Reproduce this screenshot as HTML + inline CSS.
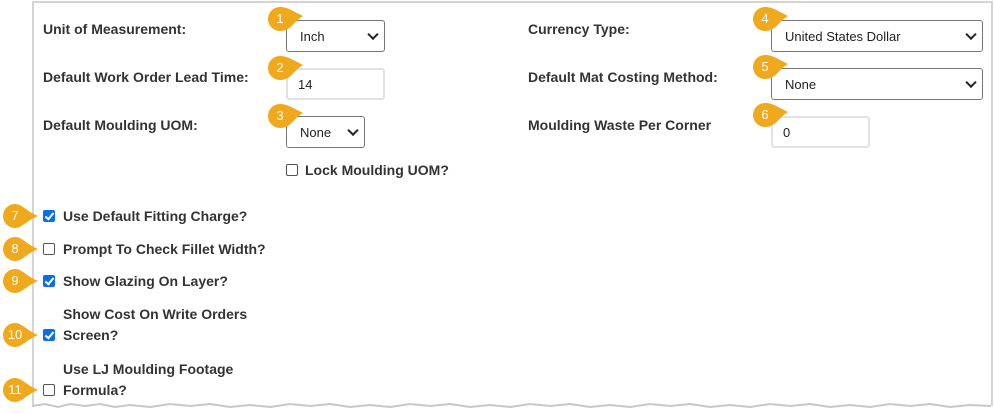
<!DOCTYPE html>
<html style="width:994px;height:414px;overflow:hidden"><head><style>
body{margin:0;width:994px;height:414px;background:#fff;position:relative;overflow:hidden;font-family:"Liberation Sans",Arial,sans-serif;}
.panel{position:absolute;left:32px;top:1px;width:957px;height:405px;border:2px solid #d4d4d4;border-bottom:none;background:#fff;box-sizing:content-box}
.lbl{position:absolute;font-weight:bold;font-size:14px;color:#333;white-space:nowrap}
.ctl{position:absolute;box-sizing:border-box;border:1px solid #777;border-radius:3px;background:#fff;font-size:13px;color:#222;padding-left:13px;display:flex;align-items:center}
.inp{border:2px solid #dfe3e8;}
.chev{position:absolute;right:7px;top:50%;width:6px;height:6px;border-right:2px solid #222;border-bottom:2px solid #222;transform:translateY(-70%) rotate(45deg)}
.cb{position:absolute;width:12px;height:12px;box-sizing:border-box;border:1px solid #555;border-radius:2px;background:#fff}
.cb.on{background:#0a6ee8;border-color:#0a6ee8}
.cb.on::after{content:"";position:absolute;left:3px;top:0px;width:3px;height:7px;border-right:2px solid #fff;border-bottom:2px solid #fff;transform:rotate(40deg)}
.b{position:absolute;width:40px;height:28px}
.b svg{position:absolute;left:0;top:0}
.b span{position:absolute;left:0;top:0;width:26px;height:26px;line-height:25px;text-align:center;color:#fff;font-size:13px}
</style></head><body>
<div class="panel"></div>
<svg width="994" height="414" style="position:absolute;left:0;top:0">
<rect x="0" y="406" width="994" height="8" fill="#fff"/>
<polyline points="32,406 45,404 58,407 70,404 85,406 100,404 115,407 130,405 150,407 170,404 190,406 210,404 230,407 250,405 270,407 290,404 310,406 330,404 350,407 370,405 390,407 410,404 430,406 450,404 470,407 490,405 510,407 530,404 550,406 570,404 590,407 610,405 630,407 650,404 670,406 690,404 710,407 730,405 750,407 770,404 790,406 810,404 830,407 850,405 870,407 890,404 910,406 930,404 950,407 970,405 991,406" fill="none" stroke="#c8c8c8" stroke-width="2"/>
</svg>

<div class="lbl" style="left:43px;top:21px">Unit of Measurement:</div>
<div class="lbl" style="left:43px;top:69px">Default Work Order Lead Time:</div>
<div class="lbl" style="left:43px;top:117px">Default Moulding UOM:</div>
<div class="lbl" style="left:528px;top:21px">Currency Type:</div>
<div class="lbl" style="left:528px;top:69px">Default Mat Costing Method:</div>
<div class="lbl" style="left:528px;top:117px">Moulding Waste Per Corner</div>

<div class="ctl" style="left:286px;top:20px;width:99px;height:32px">Inch<i class="chev"></i></div>
<div class="ctl inp" style="left:286px;top:68px;width:99px;height:32px;padding-left:10px">14</div>
<div class="ctl" style="left:286px;top:116px;width:79px;height:32px">None<i class="chev"></i></div>
<div class="ctl" style="left:771px;top:20px;width:212px;height:32px">United States Dollar<i class="chev"></i></div>
<div class="ctl" style="left:771px;top:68px;width:212px;height:32px">None<i class="chev"></i></div>
<div class="ctl inp" style="left:771px;top:116px;width:99px;height:32px;padding-left:10px">0</div>

<div class="cb" style="left:286px;top:164px"></div>
<div class="lbl" style="left:305px;top:162px">Lock Moulding UOM?</div>

<div class="cb on" style="left:43px;top:210px"></div>
<div class="lbl" style="left:63px;top:208px">Use Default Fitting Charge?</div>
<div class="cb" style="left:43px;top:243px"></div>
<div class="lbl" style="left:63px;top:241px">Prompt To Check Fillet Width?</div>
<div class="cb on" style="left:43px;top:275px"></div>
<div class="lbl" style="left:63px;top:273px">Show Glazing On Layer?</div>
<div class="lbl" style="left:63px;top:306px">Show Cost On Write Orders</div>
<div class="cb on" style="left:43px;top:329px"></div>
<div class="lbl" style="left:63px;top:327px">Screen?</div>
<div class="lbl" style="left:63px;top:361px">Use LJ Moulding Footage</div>
<div class="cb" style="left:43px;top:384px"></div>
<div class="lbl" style="left:63px;top:382px">Formula?</div>

<div class="b" style="left:267px;top:6px"><svg width="40" height="28"><path d="M13 1 C20 1 24 4 36 10 C26 16 24 25 13 25 A12 12 0 0 1 13 1Z" fill="#f0a91d"/></svg><span>1</span></div>
<div class="b" style="left:267px;top:55px"><svg width="40" height="28"><path d="M13 1 C20 1 24 4 36 10 C26 16 24 25 13 25 A12 12 0 0 1 13 1Z" fill="#f0a91d"/></svg><span>2</span></div>
<div class="b" style="left:267px;top:103px"><svg width="40" height="28"><path d="M13 1 C20 1 24 4 36 10 C26 16 24 25 13 25 A12 12 0 0 1 13 1Z" fill="#f0a91d"/></svg><span>3</span></div>
<div class="b" style="left:752px;top:6px"><svg width="40" height="28"><path d="M13 1 C20 1 24 4 36 10 C26 16 24 25 13 25 A12 12 0 0 1 13 1Z" fill="#f0a91d"/></svg><span>4</span></div>
<div class="b" style="left:752px;top:54px"><svg width="40" height="28"><path d="M13 1 C20 1 24 4 36 10 C26 16 24 25 13 25 A12 12 0 0 1 13 1Z" fill="#f0a91d"/></svg><span>5</span></div>
<div class="b" style="left:752px;top:102px"><svg width="40" height="28"><path d="M13 1 C20 1 24 4 36 10 C26 16 24 25 13 25 A12 12 0 0 1 13 1Z" fill="#f0a91d"/></svg><span>6</span></div>
<div class="b" style="left:2px;top:203px"><svg width="40" height="28"><path d="M13 1 C20 1 24 8 36 13 C24 18 20 25 13 25 A12 12 0 0 1 13 1Z" fill="#f0a91d"/></svg><span>7</span></div>
<div class="b" style="left:2px;top:236px"><svg width="40" height="28"><path d="M13 1 C20 1 24 8 36 13 C24 18 20 25 13 25 A12 12 0 0 1 13 1Z" fill="#f0a91d"/></svg><span>8</span></div>
<div class="b" style="left:2px;top:268px"><svg width="40" height="28"><path d="M13 1 C20 1 24 8 36 13 C24 18 20 25 13 25 A12 12 0 0 1 13 1Z" fill="#f0a91d"/></svg><span>9</span></div>
<div class="b" style="left:2px;top:322px"><svg width="40" height="28"><path d="M13 1 C20 1 24 8 36 13 C24 18 20 25 13 25 A12 12 0 0 1 13 1Z" fill="#f0a91d"/></svg><span>10</span></div>
<div class="b" style="left:2px;top:377px"><svg width="40" height="28"><path d="M13 1 C20 1 24 8 36 13 C24 18 20 25 13 25 A12 12 0 0 1 13 1Z" fill="#f0a91d"/></svg><span>11</span></div>
</body></html>
